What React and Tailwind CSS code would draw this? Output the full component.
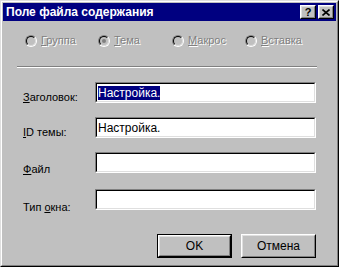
import React from "react";

const font = { fontFamily: '"Liberation Sans", Arial, sans-serif' };

const Radio = ({ checked }) => (
  <span className="w-[12px] h-[12px] rounded-full border border-t-[#808080] border-l-[#808080] border-b-white border-r-white flex">
    <span className="flex-1 rounded-full border border-t-black border-l-black border-b-[#dfdfdf] border-r-[#dfdfdf] bg-[#c0c0c0] flex items-center justify-center">
      {checked && <span className="w-[4px] h-[4px] rounded-full bg-[#808080]" />}
    </span>
  </span>
);

const RadioItem = ({ first, rest, checked, width }) => (
  <div className={`flex items-center gap-[4px] ${width}`}>
    <Radio checked={checked} />
    <span className="text-[11px] leading-[13px] text-[#808080] [text-shadow:1px_1px_0_#fff]">
      <span className="underline">{first}</span>
      {rest}
    </span>
  </div>
);

const Field = ({ label, value, selected, pt }) => (
  <div className="flex items-start">
    <div className={`w-[72px] text-[11px] leading-[13px] text-black ${pt}`}>{label}</div>
    <div className="w-[221px] h-[21px] border border-t-[#808080] border-l-[#808080] border-b-white border-r-white">
      <div className="h-full border border-t-black border-l-black border-b-[#dfdfdf] border-r-[#dfdfdf] bg-white flex items-center pl-[1px]">
        {value && (
          <span
            className={`text-[12px] leading-[14px] ${selected ? "bg-[#000080] text-white" : "text-black"}`}
          >
            {value}
          </span>
        )}
      </div>
    </div>
  </div>
);

const CapButton = ({ children }) => (
  <div className="w-[16px] h-[14px] border border-t-white border-l-white border-b-black border-r-black">
    <div className="h-full border border-t-[#dfdfdf] border-l-[#dfdfdf] border-b-[#808080] border-r-[#808080] bg-[#c0c0c0] flex items-center justify-center">
      {children}
    </div>
  </div>
);

const Button = ({ children, isDefault }) => (
  <div className={`w-[75px] h-[24px] ${isDefault ? "border border-black" : ""}`}>
    <div className="h-full border border-t-white border-l-white border-b-black border-r-black">
      <div className="h-full border border-t-[#dfdfdf] border-l-[#dfdfdf] border-b-[#808080] border-r-[#808080] bg-[#c0c0c0] flex items-center justify-center text-[12px] text-black">
        {children}
      </div>
    </div>
  </div>
);

export default function App() {
  return (
    <div style={font} className="w-[339px] h-[267px] border border-t-[#dfdfdf] border-l-[#dfdfdf] border-b-black border-r-black">
      <div className="h-full border border-t-white border-l-white border-b-[#808080] border-r-[#808080] bg-[#c0c0c0] p-[1px] flex flex-col">
        {/* title bar */}
        <div className="h-[18px] bg-[#000080] flex items-center pl-[3px] pr-[2px]">
          <span className="flex-1 text-white font-bold text-[12px] leading-[14px]">Поле файла содержания</span>
          <div className="flex gap-[2px]">
            <CapButton>
              <span className="text-[11px] font-bold leading-[10px] text-black">?</span>
            </CapButton>
            <CapButton>
              <svg width="8" height="7" viewBox="0 0 8 7">
                <path d="M0.5 0.5 L7.5 6.5 M7.5 0.5 L0.5 6.5" stroke="black" strokeWidth="1.6" />
              </svg>
            </CapButton>
          </div>
        </div>

        {/* radios */}
        <div className="flex pl-[22px] mt-[13px]">
          <RadioItem first="Г" rest="руппа" width="w-[73px]" />
          <RadioItem first="Т" rest="ема" checked width="w-[74px]" />
          <RadioItem first="М" rest="акрос" width="w-[73px]" />
          <RadioItem first="В" rest="ставка" />
        </div>

        {/* separator */}
        <div className="ml-[14px] mt-[19px] w-[300px] border-t border-t-[#808080] border-b border-b-white" />

        {/* fields */}
        <div className="flex flex-col gap-[13px] pl-[20px] mt-[14px]">
          <Field label={<><span className="underline">З</span>аголовок:</>} value="Настройка." selected pt="pt-[9px]" />
          <Field label={<><span className="underline">I</span>D темы:</>} value="Настройка." pt="pt-[9px]" />
          <Field label={<><span className="underline">Ф</span>айл</>} pt="pt-[11px]" />
          <Field label={<>Тип <span className="underline">о</span>кна:</>} pt="pt-[12px]" />
        </div>

        {/* buttons */}
        <div className="flex justify-end gap-[9px] pr-[20px] mt-[20px]">
          <Button isDefault>OK</Button>
          <Button>Отмена</Button>
        </div>
      </div>
    </div>
  );
}
